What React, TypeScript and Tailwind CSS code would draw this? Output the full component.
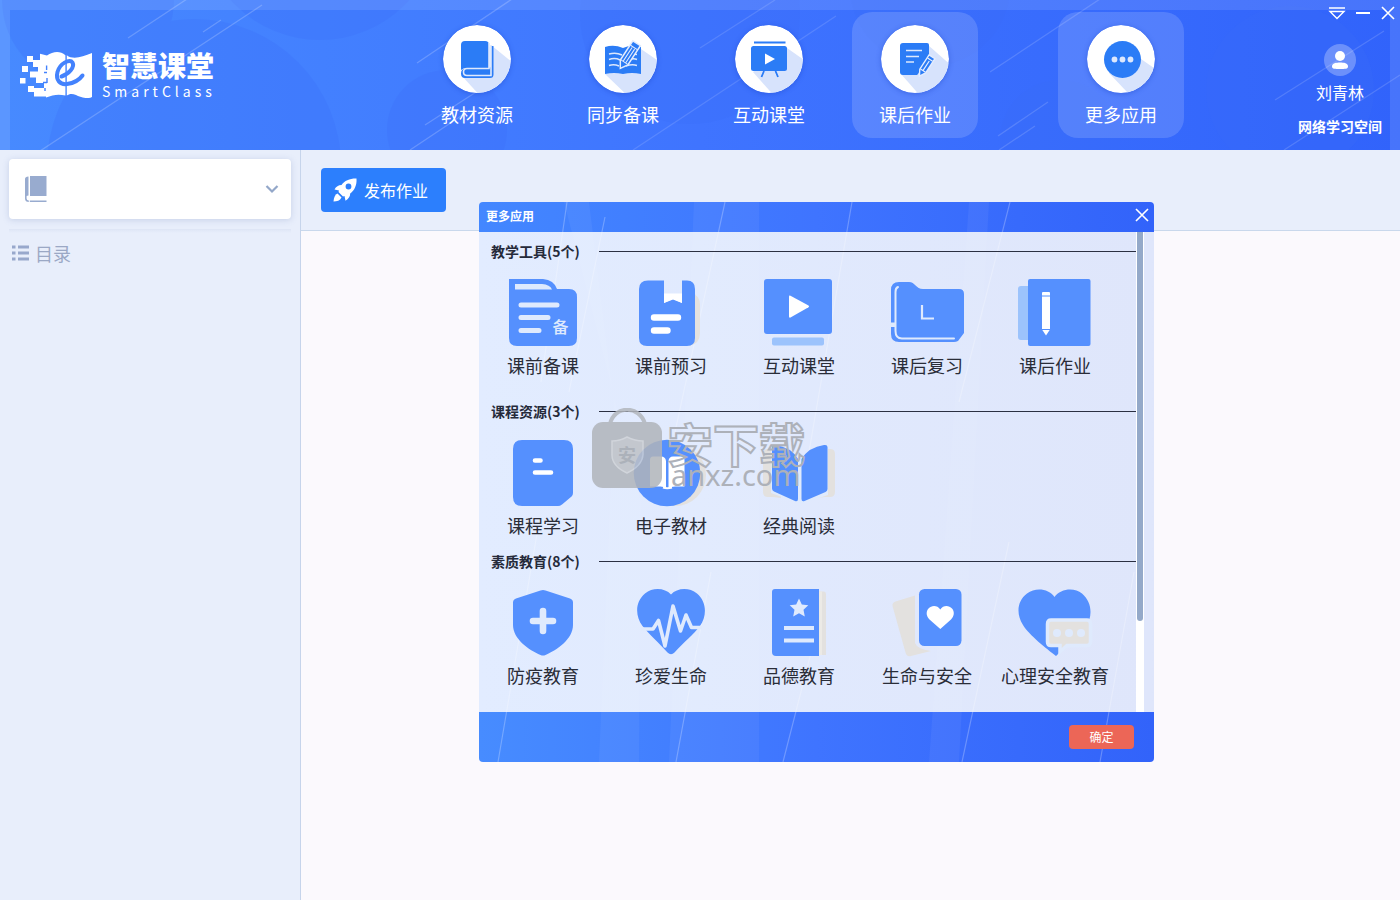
import type { ReactNode } from "react";

const BLUE = "#5590fe";
const LIGHT = "#dfeafd";
const SAND = "#e3e1df";
const NAV = "#2b7cf6";

/* ---------- header artwork ---------- */

function HeaderBackdrop() {
  return (
    <svg
      className="absolute inset-0 h-full w-full"
      viewBox="0 0 1400 150"
      preserveAspectRatio="none"
      aria-hidden="true"
    >
      <g fill="#3a6cf8" opacity="0.24">
        <circle cx="194" cy="166" r="147" />
        <circle cx="88" cy="0" r="86" />
        <circle cx="320" cy="-80" r="120" />
        <circle cx="447" cy="130" r="60" />
        <circle cx="690" cy="14" r="110" />
        <circle cx="930" cy="-14" r="80" />
        <circle cx="1060" cy="140" r="60" />
        <circle cx="1290" cy="90" r="84" />
      </g>
      <g stroke="#ffffff" strokeOpacity="0.2" strokeWidth="1.3">
        <path d="M128 38 187 -1M40 151 262 5M203 32 221 20M417 63 512 -1M425 125 487 85M410 150 470 110" />
        <path d="M633 150 836 16M700 48 775 0" strokeOpacity="0.13" />
        <path d="M990 72 1100 -1M998 136 1048 102M999 150 1035 126M1275 100 1384 31M1284 150 1400 75" strokeOpacity="0.15" />
      </g>
      <path d="M0 0H1400V150H1390V10H10V150H0Z" fill="#fff" opacity="0.11" />
    </svg>
  );
}

function Logo() {
  return (
    <svg width="72" height="46" viewBox="0 0 72 46" fill="#fff" aria-hidden="true">
      <path d="M45.400 3.200C40 -1.400 33 -.6 27 3.600L20 1.800V8H13V15H18V19.500H10V25.500H16V31H24V36H14V44.500H26V45.500C33 42.600 39 41.800 45.400 43.600Z" />
      <path d="M46.800 3.200C53 8 62 5 72 1V45C67 47.600 60 45 56 43C52 41.400 49 42 46.800 43.600Z" />
      <path d="M7 4h6v6H7zM2 14h6v6H2zM0 26h5.500v5.500H0zM8 34h6v6H8z" />
      <path
        d="M26.600 18V13.500M24 20.500H27M27 26V31M23 30.500H27M25 36V39"
        stroke="#4382fd"
        strokeWidth="1.4"
        fill="none"
      />
      <path
        d="M41.500 24.500C49 22 55 15 52.500 10.500C50 6.500 40 11 37.500 20C35.500 28 40 33 47 32C54 31 60 27 62.500 23.500"
        fill="none"
        stroke="#4382fd"
        strokeWidth="4"
        strokeLinecap="round"
      />
    </svg>
  );
}

function Disc({ id, shade, children }: { id: string; shade: string; children: ReactNode }) {
  return (
    <svg
      width="68"
      height="68"
      viewBox="0 0 68 68"
      className="rounded-full shadow-[0_1px_5px_rgba(30,70,200,0.45)]"
      aria-hidden="true"
    >
      <clipPath id={id}>
        <circle cx="34" cy="34" r="34" />
      </clipPath>
      <circle cx="34" cy="34" r="34" fill="#fff" />
      <path d={shade} fill="#d7e3fc" clipPath={`url(#${id})`} />
      {children}
    </svg>
  );
}

const navIcons: Record<string, ReactNode> = {
  book: (
    <Disc id="disc-book" shade="M19 51 48 20 80 46 70 80 40 74Z">
      <path d="M22 16H42Q46 16 46 20V43H24Q20 43 18 45V20Q18 16 22 16Z" fill={NAV} />
      <path d="M46 43 48 42V21H50.500V49.500Q50.500 53 47 53H22Q18 53 18 48.500 18 44 22 43.500Z" fill={NAV} />
      <path d="M46 18V43.500H24Q20.500 43.500 20.500 47T24 50.500H48V20" fill="none" stroke="#dfe9fd" strokeWidth="1.600" />
      <path d="M24 47H45" stroke={NAV} strokeWidth="2.500" strokeLinecap="round" />
    </Disc>
  ),
  write: (
    <Disc id="disc-write" shade="M16 49 52 24 90 50 70 80 42 74Z">
      <path d="M16 22Q25 19 34 23Q43 19 52 22V49Q43 47 34 49Q25 47 16 49Z" fill={NAV} />
      <path
        d="M20 29Q27 27 33 30M20 34.500Q26 32.500 31 35M20 40.500Q25 39 30 41M37 41Q43 39 48 40.500M40 35Q44 33 48 34.500M44 29 48 29.500"
        fill="none"
        stroke="#dce8fd"
        strokeWidth="1.500"
      />
      <g transform="translate(40 30) rotate(33)">
        <path d="M-4.500 -14H4.500V9L0 16L-4.500 9Z" fill={NAV} stroke="#e4edfe" strokeWidth="1.500" />
        <path d="M-4 -9H4M-1.500 -8V8M1.500 -8V8M-4 8.500H4" stroke="#e4edfe" strokeWidth="1" />
      </g>
    </Disc>
  ),
  screen: (
    <Disc id="disc-screen" shade="M18 47 52 23 90 50 70 80 42 74Z">
      <path d="M19 17.500H50.500" stroke={NAV} strokeWidth="1.800" />
      <rect x="16" y="21" width="36" height="25" rx="2.500" fill={NAV} />
      <path d="M30 28.500 40 34 30 39.500Z" fill="#fff" />
      <path d="M29 46 26.500 52M40.500 46 43 52" stroke={NAV} strokeWidth="1.800" />
    </Disc>
  ),
  homework: (
    <Disc id="disc-homework" shade="M20 49 47 20 90 58 70 80 42 74Z">
      <path d="M22 18H46Q48 18 48 20V31L37 49 36 50H22Q19 50 19 47V21Q19 18 22 18Z" fill={NAV} />
      <path d="M25 25.500H41M25 31.500H38M25 37H33" stroke="#dce8fd" strokeWidth="1.500" />
      <g transform="translate(45 41) rotate(33)">
        <path d="M-3.500 -11H3.500V6L0 12L-3.500 6Z" fill={NAV} stroke="#e4edfe" strokeWidth="1.400" />
        <path d="M-3 -7.500H3M0 -6V5M-3 5.500H3" stroke="#e4edfe" strokeWidth="1.200" />
      </g>
    </Disc>
  ),
  more: (
    <Disc id="disc-more" shade="M22 48 54 34 80 52 60 80 40 67Z">
      <circle cx="35.500" cy="34.500" r="18.500" fill={NAV} />
      <g fill="#dce8fd">
        <circle cx="27.500" cy="34.500" r="2.900" />
        <circle cx="35.500" cy="34.500" r="2.900" />
        <circle cx="43.500" cy="34.500" r="2.900" />
      </g>
    </Disc>
  ),
};

function NavItem({ icon, label, active }: { icon: string; label: string; active?: boolean }) {
  return (
    <button
      type="button"
      className={
        active
          ? "flex h-[126px] w-[126px] flex-col items-center rounded-[20px] bg-white/15 pt-[13px] text-white"
          : "flex h-[126px] w-[126px] flex-col items-center rounded-[20px] pt-[13px] text-white"
      }
    >
      {navIcons[icon]}
      <span className="mt-[7px] text-lg leading-7">{label}</span>
    </button>
  );
}

function Header() {
  return (
    <header className="relative flex h-[150px] shrink-0 bg-gradient-to-r from-[#478aff] via-[#3f74ff] to-[#3163fb]">
      <HeaderBackdrop />
      <div className="relative flex w-[414px] shrink-0 items-center gap-[10px] pl-5">
        <Logo />
        <div className="flex flex-col text-white">
          <span className="text-[28px] leading-[32px] font-black">智慧课堂</span>
          <span className="text-sm leading-5 tracking-[4px]">SmartClass</span>
        </div>
      </div>
      <nav className="relative flex gap-5 pt-3">
        <NavItem icon="book" label="教材资源" />
        <NavItem icon="write" label="同步备课" />
        <NavItem icon="screen" label="互动课堂" />
        <NavItem icon="homework" label="课后作业" active />
        <div className="pl-[60px]">
          <NavItem icon="more" label="更多应用" active />
        </div>
      </nav>
      <div className="relative ml-auto flex flex-col items-center pt-11 pr-[18px] text-white">
        <svg width="32" height="32" viewBox="0 0 32 32" fill="#fff" aria-hidden="true">
          <circle cx="16" cy="16" r="16" opacity="0.28" />
          <circle cx="16" cy="12" r="5" />
          <path d="M8 22.500C8 19 12 18.500 16 18.500S24 19 24 22.500C24 25 21 25 16 25S8 25 8 22.500Z" />
        </svg>
        <span className="mt-[2px] text-base leading-7">刘青林</span>
        <a href="#space" className="mt-2 text-sm leading-6 font-bold">
          网络学习空间
        </a>
      </div>
      <div className="absolute top-1 right-1 flex gap-2">
        <button type="button" aria-label="菜单">
          <svg width="18" height="18" viewBox="0 0 18 18" fill="none" stroke="#fff" strokeWidth="1.400">
            <path d="M1 4H17M2 7.500H16L9 14.500Z" />
          </svg>
        </button>
        <button type="button" aria-label="最小化">
          <svg width="18" height="18" viewBox="0 0 18 18" stroke="#fff" strokeWidth="2">
            <path d="M2 9H16" />
          </svg>
        </button>
        <button type="button" aria-label="关闭窗口">
          <svg width="16" height="18" viewBox="0 0 16 18" stroke="#fff" strokeWidth="1.600">
            <path d="M2 3 14 15M14 3 2 15" />
          </svg>
        </button>
      </div>
    </header>
  );
}

/* ---------- sidebar and work area ---------- */

function Sidebar() {
  return (
    <aside className="w-[301px] shrink-0 border-r border-[#c6d4eb] bg-[#e8eefb] px-[9px] pt-[9px]">
      <label className="relative flex h-[60px] items-center rounded bg-white shadow-[0_1px_6px_rgba(120,140,190,0.3)]">
        <svg className="absolute left-4" width="22" height="28" viewBox="0 0 22 28" aria-hidden="true">
          <path d="M0 4Q0 1.500 3.500 1.500V20.500Q1 20.500 0 22Z" fill="#98abcf" />
          <path d="M5 1H21.500V21H5Z" fill="#98abcf" />
          <path d="M.8 21V23.500Q.8 26.300 4 26.300H21.500" fill="none" stroke="#98abcf" strokeWidth="1.600" />
          <path d="M4.300 21.500V27" stroke="#fff" strokeWidth="1" />
        </svg>
        <select aria-label="教材" className="h-full w-full appearance-none rounded bg-transparent px-12 text-base text-[#8fa3c9]">
          <option value=""></option>
        </select>
        <svg className="pointer-events-none absolute right-3" width="14" height="10" viewBox="0 0 14 10" fill="none" stroke="#93a7c9" strokeWidth="2.200" aria-hidden="true">
          <path d="M1.500 2 7 7.500 12.500 2" />
        </svg>
      </label>
      <div className="mt-[10px] h-1 bg-gradient-to-b from-[#dee5f5] to-[#e8eefb]" />
      <h2 className="mt-[6px] flex items-center gap-[6px] pl-[3px] text-lg leading-7 text-[#9ba8c5]">
        <svg width="17" height="16" viewBox="0 0 17 16" fill="#98a8cc" aria-hidden="true">
          <path d="M0 .5h3.500v3H0zM6 .5H17v3H6zM0 6.500h3.500v3H0zM6 6.500H17v3H6zM0 12.500h3.500v3H0zM6 12.500H17v3H6z" />
        </svg>
        目录
      </h2>
    </aside>
  );
}

function Workspace() {
  return (
    <main className="flex flex-1 flex-col bg-[#fbf9fd]">
      <div className="flex h-[81px] items-center border-b border-[#c9d8ec] bg-[#e8eefb] pl-5">
        <button type="button" className="flex h-11 items-center gap-[7px] rounded bg-[#2c7ffd] pr-[18px] pl-3 text-base text-white">
          <svg width="24" height="24" viewBox="0 0 24 24" fill="#fff" aria-hidden="true">
            <path
              fillRule="evenodd"
              d="M23.500 .5C17 .3 11.500 2.500 8.500 7C5.500 7 3 8.500 1.500 11.500L6 12.500 5.500 14 10 18.500 11.500 18 12.500 22.800C15.500 21 17.200 18.500 17.200 15.500C21.500 12.500 24 7 23.500 .5ZM15.500 5.600A2.900 2.900 0 1 1 15.500 11.400A2.900 2.900 0 1 1 15.500 5.600Z"
            />
            <path d="M4.500 15.500C2 16.500 .8 19.500 .5 23.500C4 23.500 7 22.500 8.500 19.500Z" />
          </svg>
          发布作业
        </button>
      </div>
    </main>
  );
}

/* ---------- application icons ---------- */

const appIcons: Record<string, ReactNode> = {
  prepare: (
    <>
      <path d="M4 0H38Q49 1 52 10H64Q72 10 72 18V59Q72 67 64 67H12Q4 67 4 59Z" fill={BLUE} />
      <path d="M10 5H37Q45 5.500 47 10.500H10Z" fill={LIGHT} />
      <path d="M16 26H52M16 38.500H43M16 51.500H34" stroke={LIGHT} strokeWidth="5" strokeLinecap="round" />
      <text x="55.500" y="53.500" textAnchor="middle" fontSize="16" fontWeight="500" fill={LIGHT}>备</text>
    </>
  ),
  preview: (
    <>
      <path d="M58 14Q67 16 67 26V54Q67 65 56 67Z" fill={SAND} />
      <path d="M15 1.500H31V24L40 20 49 24V1.500H54Q62 1.500 62 10V59Q62 67 54 67H14Q6 67 6 59V10Q6 1.500 15 1.500Z" fill={BLUE} />
      <path d="M31 14.500H49V24L40 20.500 31 24Z" fill="#fff" />
      <path d="M21 38.500H45M21 51.500H34.500" stroke="#fff" strokeWidth="6.400" strokeLinecap="round" />
    </>
  ),
  classroom: (
    <>
      <rect x="3" y="0" width="68" height="55" rx="3" fill={BLUE} />
      <path d="M28 17.500Q28 16 29.500 16.800L47.500 26.500Q48.800 27.500 47.500 28.300L29.500 38.500Q28 39 28 37.500Z" fill="#fff" />
      <rect x="11" y="58.500" width="52" height="8" rx="2" fill="#9cc3fc" />
    </>
  ),
  review: (
    <>
      <path d="M10 3H20C26 3 27 10 34 10H70Q75 10 75 15V54L69 62Q67 63 65 63H10Q2 63 2 55V11Q2 3 10 3Z" fill={BLUE} />
      <path d="M9 8Q6.500 9 6.500 13V52Q6.500 59.500 13 59.500H65" fill="none" stroke={LIGHT} strokeWidth="2" strokeLinecap="round" />
      <path d="M1 43.500H6.500V48H1Z" fill={LIGHT} />
      <path d="M33 26V39.500H45" fill="none" stroke={LIGHT} strokeWidth="2.200" />
    </>
  ),
  homework: (
    <>
      <rect x="1" y="7" width="14" height="54" rx="3" fill="#9cc3fc" />
      <rect x="11" y="0" width="62.500" height="67" rx="2" fill={BLUE} />
      <path d="M25 14Q25 13 26 13H32Q33 13 33 14V50.500L29 56.500 25 50.500Z" fill="#fff" />
      <path d="M25 17H33M25 50.500H33" stroke={BLUE} strokeWidth="1" />
    </>
  ),
  course: (
    <>
      <path d="M17 1H59Q68 1 68 10V54Q68 56 66.500 57.500L57 65.500Q55 67 53 67H17Q8 67 8 58V10Q8 1 17 1Z" fill={BLUE} />
      <path d="M30 21.500H35.500M30 33.500H46" stroke="#fff" strokeWidth="4.600" strokeLinecap="round" />
    </>
  ),
  ebook: (
    <>
      <circle cx="42" cy="36" r="31" fill={SAND} />
      <circle cx="34" cy="34" r="33.300" fill={BLUE} />
      <path d="M17 21Q17 17.500 20 17.500H28Q32.500 17.500 33 22V49Q30 47 26 47.500H17ZM35.500 22Q36 17.500 40 17.500H48Q51.500 17.500 51.500 21V47.500H42Q38 47.500 35.500 49Z" fill="#fff" />
      <path d="M30 48.500Q34 50 39 48.500" stroke="#fff" strokeWidth="2" fill="none" />
    </>
  ),
  reading: (
    <>
      <path d="M10 10H7Q2 10 2 15V53Q2 58 7 58H12L20 59V20ZM66 10H69Q74 10 74 15V53Q74 58 69 58H64L56 59Z" fill={SAND} />
      <path d="M10 5 38 19 67 5V56L40 65 10 54Z" fill={LIGHT} />
      <path d="M11 8Q11 5.500 14 6Q30 8 37 20V60Q37 63 34 62L13 52.500Q11 51.500 11 49.500ZM40.500 20Q48 8 63 6Q66.500 5.500 66.500 8V50Q66.500 52 64.500 53L43.500 62Q40.500 63 40.500 60Z" fill={BLUE} />
    </>
  ),
  shield: (
    <>
      <path d="M35.500 1.500Q38 .5 40.500 1.500L65 9.500Q68 10.500 68 13.500V36C68 50 52 61 40.500 66Q38 67 35.500 66C24 61 8 50 8 36V13.500Q8 10.500 11 9.500Z" fill={BLUE} />
      <path d="M38 22V42M28 32H48" stroke={LIGHT} strokeWidth="6.600" strokeLinecap="round" />
    </>
  ),
  life: (
    <>
      <path d="M38 5.500C44 -1 56 -2 64 4.500C74 13 74 27 67 37C61 45 50 54 41.500 63.500Q38 67 34.500 63.500C26 54 16 45 9.500 37C2 27 2 13 12 4.500C20 -2 32 -1 38 5.500Z" fill={BLUE} />
      <path d="M8 40H20L25.500 31.500 32 57 40 17 47.500 42 53 26 58.500 38.500H69" fill="none" stroke={LIGHT} strokeWidth="3.600" strokeLinejoin="round" />
    </>
  ),
  moral: (
    <>
      <path d="M58 2.500H63Q65 2.500 65 5V66H58Z" fill={SAND} />
      <path d="M58 2.500H61V66H58Z" fill="#eceae6" />
      <path d="M14 0H58V67H15Q11 67 11 63V3Q11 0 14 0Z" fill={BLUE} />
      <path d="M38 9.500 40.800 15.600 47.300 16.300 42.500 20.800 43.800 27.500 38 24.200 32.200 27.500 33.500 20.800 28.700 16.300 35.200 15.600Z" fill={LIGHT} />
      <path d="M23 39H53M23 51.500H53" stroke={LIGHT} strokeWidth="4.200" />
    </>
  ),
  safety: (
    <>
      <path d="M3.500 17Q3 13.500 6.500 12.500L26 6.500V54Q28 60 42 62L22 67Q17.500 68 16.500 63.500Z" fill={SAND} />
      <rect x="30" y="0" width="42.500" height="57" rx="5.500" fill={BLUE} />
      <path d="M51.300 20.500C54 16 60 16 63 19.500C66 23 65 27.500 62 30.500L51.300 40 40.500 30.500C37.500 27.500 36.500 23 39.500 19.500C42.500 16 48.500 16 51.300 20.500Z" fill="#fff" />
    </>
  ),
  mind: (
    <>
      <path d="M37.500 8C43 0 57 -2 65 4.500C75 13 76 27 69 38L39 67C30 60 12 46 6 36C-1 25 0 12 10 4.500C19 -2 32 0 37.500 8Z" fill={BLUE} />
      <path
        d="M34 31H70Q73.500 31 73.500 35V53Q73.500 56.500 70 56.500H50L43 63V56.500H34Q30.500 56.500 30.500 53V35Q30.500 31 34 31Z"
        fill={SAND}
        stroke={LIGHT}
        strokeWidth="3.500"
      />
      <g fill={LIGHT}>
        <circle cx="40" cy="44" r="4" />
        <circle cx="52" cy="44" r="4" />
        <circle cx="64" cy="44" r="4" />
      </g>
    </>
  ),
};

const sections = [
  {
    title: "教学工具(5个)",
    apps: [
      { icon: "prepare", label: "课前备课" },
      { icon: "preview", label: "课前预习" },
      { icon: "classroom", label: "互动课堂" },
      { icon: "review", label: "课后复习" },
      { icon: "homework", label: "课后作业" },
    ],
  },
  {
    title: "课程资源(3个)",
    apps: [
      { icon: "course", label: "课程学习" },
      { icon: "ebook", label: "电子教材" },
      { icon: "reading", label: "经典阅读" },
    ],
  },
  {
    title: "素质教育(8个)",
    apps: [
      { icon: "shield", label: "防疫教育" },
      { icon: "life", label: "珍爱生命" },
      { icon: "moral", label: "品德教育" },
      { icon: "safety", label: "生命与安全" },
      { icon: "mind", label: "心理安全教育" },
    ],
  },
];

function AppButton({ icon, label }: { icon: string; label: string }) {
  return (
    <button type="button" className="flex w-[128px] flex-col items-center gap-1 text-lg leading-7 whitespace-nowrap text-[#2a2d38]">
      <svg width="76" height="68" viewBox="0 0 76 68" aria-hidden="true">
        {appIcons[icon]}
      </svg>
      {label}
    </button>
  );
}

function Streaks() {
  return (
    <svg className="pointer-events-none absolute inset-0 h-full w-full" viewBox="0 0 675 560" preserveAspectRatio="none" aria-hidden="true">
      <path d="M85 0H110L135 200 120 560H160L162 300Z M215 0H280V560H190Z M490 0H510L480 560H450Z" fill="#fff" opacity="0.05" />
      <g stroke="#fff" strokeOpacity="0.25" strokeWidth="1.200">
        <path d="M88 0 62 180M126 15 90 190M246 0 196 230M373 0 330 250M531 0 480 200" />
        <path d="M19 560 60 320M197 560 232 370M304 560 345 400M483 560 530 340M621 560 655 370" />
      </g>
    </svg>
  );
}

function Watermark() {
  return (
    <div className="pointer-events-none absolute top-[206px] left-[113px] flex">
      <svg width="71" height="82" viewBox="0 0 71 82" opacity="0.85" aria-hidden="true">
        <path d="M18 16C22 -3 48 -3 53 16" fill="none" stroke="#b3b7bd" strokeWidth="4" />
        <rect x="0" y="14" width="70" height="66" rx="11" fill="#b0b4ba" />
        <path d="M35 29Q43 33 51 33V47Q50 58 35 65Q20 58 20 47V33Q28 33 35 29Z" fill="#bec1c6" stroke="#ced1d5" strokeWidth="1.500" />
        <text x="35" y="54" textAnchor="middle" fontSize="18" fontWeight="700" fill="#a3a8af">安</text>
      </svg>
      <div className="flex flex-col pt-[14px] pl-1">
        <span className="text-[46px] leading-[40px] font-bold text-transparent [-webkit-text-stroke:2px_#adb1b9]">安下载</span>
        <span className="pl-1 font-['Noto_Sans',sans-serif] text-[29px] leading-[26px] text-[#adb1b9]">anxz.com</span>
      </div>
    </div>
  );
}

function MoreAppsDialog() {
  return (
    <section role="dialog" aria-label="更多应用" className="absolute top-[202px] left-[479px] flex w-[675px] flex-col overflow-hidden rounded-sm">
      <Streaks />
      <div className="flex h-[30px] items-start justify-between bg-gradient-to-r from-[#4387ff] via-[#3f74ff] to-[#3263fa] pt-[5px] pr-1 pl-[7px] text-white">
        <h1 className="relative text-xs leading-[18px] font-bold">更多应用</h1>
        <button type="button" aria-label="关闭" className="relative">
          <svg width="16" height="16" viewBox="0 0 16 16" stroke="#fff" strokeWidth="1.600">
            <path d="M2 2 14 14M14 2 2 14" />
          </svg>
        </button>
      </div>
      <div className="flex h-[480px] bg-gradient-to-r from-[#e2ecff] to-[#dfe6fb]">
        <div className="relative flex-1 overflow-hidden">
          {sections.map((section, index) => (
            <section key={section.title} className={index === 0 ? "pb-[13px]" : "pb-[3px]"}>
              <div className="flex h-[38px] items-center pl-3">
                <h2 className="w-[108px] text-sm leading-5 font-bold text-[#252a3a]">{section.title}</h2>
                <div className="h-px flex-1 bg-[#2b3042]" />
              </div>
              <div className="flex pt-[9px]">
                {section.apps.map((app) => (
                  <AppButton key={app.label} icon={app.icon} label={app.label} />
                ))}
              </div>
            </section>
          ))}
        </div>
        <div className="relative mr-[10px] w-2 bg-white px-px">
          <div className="h-[389px] rounded-b-sm bg-[#94a9c9]" />
        </div>
      </div>
      <div className="flex h-[50px] items-center justify-end bg-gradient-to-r from-[#478cff] via-[#3f74ff] to-[#3263fa] pr-5">
        <button type="button" className="relative h-6 w-[65px] rounded bg-[#ec6657] text-xs text-white">
          确定
        </button>
      </div>
      <Watermark />
    </section>
  );
}

export default function App() {
  return (
    <div className="relative flex min-h-screen flex-col font-['Noto_Sans_CJK_SC',sans-serif]">
      <Header />
      <div className="flex flex-1">
        <Sidebar />
        <Workspace />
      </div>
      <MoreAppsDialog />
    </div>
  );
}
